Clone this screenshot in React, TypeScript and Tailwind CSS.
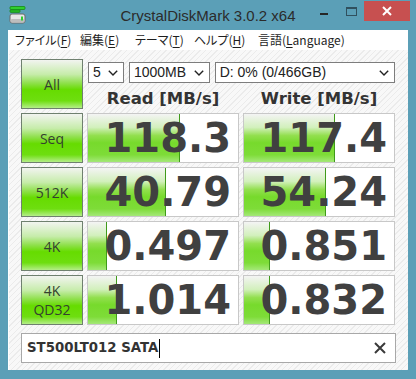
import React from 'react';

interface Row {
  label: string[];
  read: string;
  write: string;
  readFill: number;
  writeFill: number;
}

const rows: Row[] = [
  { label: ['Seq'], read: '118.3', write: '117.4', readFill: 92, writeFill: 91 },
  { label: ['512K'], read: '40.79', write: '54.24', readFill: 78, writeFill: 82 },
  { label: ['4K'], read: '0.497', write: '0.851', readFill: 19, writeFill: 26 },
  { label: ['4K', 'QD32'], read: '1.014', write: '0.832', readFill: 29, writeFill: 26 },
];

const Chevron = () => (
  <svg width="10" height="6" viewBox="0 0 10 6" className="shrink-0">
    <path d="M0.8 0.8 L5 5 L9.2 0.8" fill="none" stroke="#222" strokeWidth="1.4" />
  </svg>
);

const TestButton = ({ lines }: { lines: string[] }) => (
  <div className="flex flex-col items-center justify-center border border-[#6f806f] bg-[linear-gradient(180deg,#f2f4f0,#c6ecaa_30%,#8fe04c_48%,#66dc00_62%,#6ede10_85%,#b4ee88)]">
    {lines.map((l) => (
      <span key={l} className="text-[14px] leading-[19px] text-[#34412f] font-['Open_Sans',sans-serif]">
        {l}
      </span>
    ))}
  </div>
);

const ResultCell = ({ value, fill }: { value: string; fill: number }) => (
  <div className="relative flex items-center justify-end border border-[#c8c8c8] bg-white pr-[7px]">
    <div
      className="absolute left-0 top-0 bottom-0 border-r border-[#3f9a1a] bg-[linear-gradient(180deg,#f4f4f4,#d2f0bc_28%,#92df4e_45%,#77da2c_60%,#7edc38_85%,#a4e878)]"
      style={{ width: fill }}
    />
    <span className="relative font-['DejaVu_Sans',sans-serif] font-bold text-[40px] leading-none text-[#404040]">
      {value}
    </span>
  </div>
);

const Select = ({ text, width }: { text: string; width: string }) => (
  <div className={`flex h-[21px] items-center justify-between border border-[#7d7d7d] bg-white pl-[4px] pr-[5px] text-[14px] text-[#222] font-['Liberation_Sans',sans-serif] ${width}`}>
    <span>{text}</span>
    <Chevron />
  </div>
);

const MenuItem = ({ pre, key1, width }: { pre: string; key1: string; width: string }) => (
  <span className={`${width} whitespace-nowrap`}>
    {pre}(<span className="underline underline-offset-2">{key1}</span>)
  </span>
);

export default function App() {
  return (
    <div className="w-[416px] h-[379px] bg-[#5b9fb7] flex flex-col overflow-hidden">
      {/* title bar */}
      <div className="relative h-[30px] shrink-0 flex items-center justify-center">
        <svg className="absolute left-[9px] top-[6px]" width="18" height="18" viewBox="0 0 18 18">
          <rect x="1" y="0.5" width="15" height="3" rx="1" fill="#2fcf2f" stroke="#178a17" strokeWidth="0.8" />
          <rect x="1" y="3.8" width="10" height="2.6" rx="0.8" fill="#24b824" stroke="#178a17" strokeWidth="0.8" />
          <rect x="1" y="8" width="15" height="9" rx="2" fill="#e6e6e6" stroke="#6a6a6a" strokeWidth="1" />
          <rect x="1.5" y="13" width="14" height="3.5" rx="1.5" fill="#bdbdbd" />
          <rect x="12" y="10.5" width="2" height="4" fill="#2fcf2f" />
        </svg>
        <span className="font-['Liberation_Sans',sans-serif] text-[15px] text-[#2b2b2b] mt-[2px]">CrystalDiskMark 3.0.2 x64</span>
        <div className="absolute left-[320px] top-[13px] w-[8px] h-[2px] bg-[#262626]" />
        <div className="absolute left-[346px] top-[7px] w-[11px] h-[9px] border border-t-2 border-[#30505e]" />
        <div className="absolute left-[364px] top-[1px] w-[46px] h-[20px] bg-[#c75050] flex items-center justify-center">
          <svg width="10" height="10" viewBox="0 0 10 10">
            <path d="M1 1 L9 9 M9 1 L1 9" stroke="#fff" strokeWidth="2" />
          </svg>
        </div>
      </div>

      {/* menu bar */}
      <div className="mx-[8px] h-[19px] shrink-0 bg-white flex items-center pl-[7px] text-[12px] text-[#1e1e1e] font-['Noto_Sans_CJK_JP',sans-serif] [font-feature-settings:'palt']">
        <MenuItem pre="ファイル" key1="F" width="w-[65px]" />
        <MenuItem pre="編集" key1="E" width="w-[55px]" />
        <MenuItem pre="テーマ" key1="T" width="w-[59px]" />
        <MenuItem pre="ヘルプ" key1="H" width="w-[64px]" />
        <span className="whitespace-nowrap">
          言語(<span className="underline underline-offset-2">L</span>anguage)
        </span>
      </div>

      {/* client area */}
      <div className="mx-[8px] h-[321px] shrink-0 border-l border-t border-white bg-[repeating-linear-gradient(135deg,#f8f8f8_0px,#f8f8f8_3px,#ebebeb_3px,#ebebeb_4px)] pl-[12px] pt-[9px]">
        <div className="grid grid-cols-[62px_152px_152px] auto-rows-[50px] gap-[4px]">
          <TestButton lines={['All']} />
          <div className="col-span-2 flex flex-col">
            <div className="flex gap-[5px] pl-[1px] pt-[3px]">
              <Select text="5" width="w-[36px]" />
              <Select text="1000MB" width="w-[81px]" />
              <Select text="D: 0% (0/466GB)" width="w-[181px]" />
            </div>
            <div className="grid grid-cols-[152px_152px] gap-[4px] pt-[6px] font-['DejaVu_Sans',sans-serif] font-bold text-[16.5px] leading-[20px] text-[#333]">
              <span className="text-center">Read [MB/s]</span>
              <span className="text-center">Write [MB/s]</span>
            </div>
          </div>
          {rows.map((r) => (
            <React.Fragment key={r.read}>
              <TestButton lines={r.label} />
              <ResultCell value={r.read} fill={r.readFill} />
              <ResultCell value={r.write} fill={r.writeFill} />
            </React.Fragment>
          ))}
        </div>

        {/* comment box */}
        <div className="mt-[8px] w-[375px] h-[30px] border border-[#a8a8a8] bg-white flex items-center justify-between pl-[5px] pr-[9px]">
          <div className="flex items-center">
            <span className="font-['DejaVu_Sans',sans-serif] font-bold text-[13.3px] text-[#333]">ST500LT012 SATA</span>
            <span className="ml-[1px] w-[1px] h-[19px] bg-black" />
          </div>
          <svg width="12" height="12" viewBox="0 0 12 12">
            <path d="M1 1 L11 11 M11 1 L1 11" stroke="#3a3a3a" strokeWidth="2" />
          </svg>
        </div>
      </div>
    </div>
  );
}
